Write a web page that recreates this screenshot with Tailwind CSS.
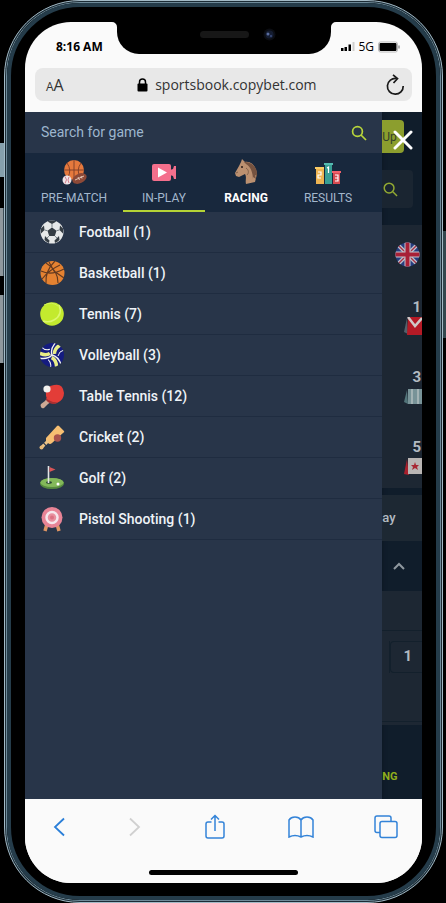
<!DOCTYPE html>
<html lang="en">
<head>
    <meta charset="UTF-8">
    <meta name="viewport" content="width=device-width, initial-scale=1.0">
    <title>CopyBet Sportsbook</title>
    <script src="https://cdn.jsdelivr.net/npm/@tailwindcss/browser@4"></script>
</head>
<body class="bg-black font-[Roboto,sans-serif]">

<div class="relative flex min-h-screen pl-1 pr-[3px]">

    <!-- Side buttons -->
    <div class="absolute left-0 top-[143px] h-[34px] w-1 bg-[#86a0ac]"></div>
    <div class="absolute left-0 top-[208px] h-[68px] w-1 border-r border-[#3c4c55] bg-[#8f989d]"></div>
    <div class="absolute left-0 top-[295px] h-[68px] w-1 border-r border-[#3c4c55] bg-[#8f989d]"></div>
    <div class="absolute right-0 top-[231px] h-[107px] w-[3px] bg-[#33484f]"></div>

    <!-- Phone frame -->
    <div class="flex flex-1 rounded-[76px] border border-[#a3bac6] bg-[#1b2b35] p-px">
    <div class="flex flex-1 rounded-[74px] border border-[#6f8b9a] bg-black">
    <div class="flex flex-1 rounded-[73px] border-4 border-[#253c4a] px-[14px] pb-[13px] pt-[15px]">
    <div class="flex flex-1 flex-col overflow-hidden rounded-[46px] bg-[#fafafa]">

        <!-- Status bar -->
        <header class="font-['Open_Sans',sans-serif] text-black">
            <div class="grid h-[46px] grid-cols-[1fr_214px_1fr]">
                <div class="flex h-[50px] items-center pl-[31px] text-[12px] font-bold whitespace-nowrap">8:16 AM</div>
                <div class="relative h-8 rounded-b-[22px] bg-black">
                    <svg class="absolute -left-[5px] top-0" width="5" height="5"><path d="M0 0H5V5A5 5 0 0 0 0 0Z" fill="#000"/></svg>
                    <svg class="absolute -right-[5px] top-0" width="5" height="5"><path d="M5 0H0V5A5 5 0 0 1 5 0Z" fill="#000"/></svg>
                    <div class="flex items-center pl-[83px] pt-[6px]">
                        <div class="h-[7px] w-[49px] rounded-full bg-[#171717]"></div>
                        <svg class="ml-[14px]" width="13" height="13" viewBox="0 0 13 13"><circle cx="6.500" cy="6.500" r="6" fill="#0b0d12"/><circle cx="6.500" cy="6.500" r="4" fill="#141c30"/><circle cx="5" cy="6" r="1.500" fill="#5a6da0"/><circle cx="8" cy="8" r="1.200" fill="#33436e"/></svg>
                    </div>
                </div>
                <div class="flex h-[50px] items-center gap-1 pl-[10px] text-[12px]">
                    <svg width="14" height="10" viewBox="0 0 14 10"><path d="M0 6h2.500v3H0zM3.500 5H6v4H3.500zM7.500 2.500H10V9H7.500z" fill="#000"/><path d="M11.500 0h2v9h-2z" fill="#cfcfcf"/></svg>
                    <span>5G</span>
                    <svg width="23" height="12" viewBox="0 0 23 12"><rect x=".5" y="1" width="19" height="10" rx="2" fill="#fff" stroke="#bbb"/><rect x="1.500" y="2" width="17" height="8" rx="1" fill="#000"/><path d="M21 4.500v3" stroke="#999" stroke-width="1.500"/></svg>
                </div>
            </div>

            <!-- Address bar -->
            <div class="px-[10px] pb-[11px]">
                <div class="flex h-[33px] items-center rounded-lg bg-[#e8e8e8] pl-[11px] pr-[7px] text-[#333]">
                    <button class="flex items-baseline" aria-label="Text size"><span class="text-[12px]">A</span><span class="text-[16px]">A</span></button>
                    <div class="flex flex-1 items-center justify-center gap-[7px] pl-1 text-[14px]">
                        <svg width="11" height="14" viewBox="0 0 11 14"><path d="M2.500 6V4a3 3 0 0 1 6 0v2" fill="none" stroke="#000" stroke-width="1.500"/><rect x=".5" y="5.500" width="10" height="8" rx="1" fill="#000"/></svg>
                        <span>sportsbook.copybet.com</span>
                    </div>
                    <button aria-label="Reload"><svg width="19" height="22" viewBox="0 0 19 22" fill="none" stroke="#1a1a1a" stroke-width="1.700"><path d="M10.500 4.500A7.900 7.900 0 1 0 17.200 12"/><path d="M7 .8l4.500 3.800L7.500 9"/></svg></button>
                </div>
            </div>
        </header>

        <main class="flex flex-1 overflow-hidden bg-[#101d2b]">

            <!-- Menu drawer -->
            <nav class="w-9/10 bg-[#283549] shadow-[0_0_4px_#0a1420]">
                <div class="flex h-[41px] items-center pl-4 pr-[15px]">
                    <input type="text" aria-label="Search for game" placeholder="Search for game" class="min-w-0 flex-1 bg-transparent text-[14px] outline-none placeholder:text-[#9db6ce]">
                    <button aria-label="Search"><svg width="16" height="16" viewBox="0 0 16 16" fill="none" stroke="#b7d43b" stroke-width="1.700"><circle cx="6.500" cy="6.500" r="4.900"/><path d="M10 10l5 5"/></svg></button>
                </div>

                <div class="flex h-[59px] bg-[#18283d] text-[12px] text-[#a3b7cc]">
                    <button class="flex w-[98px] flex-col items-center gap-1 pt-[6px]">
                        <svg width="26" height="26" viewBox="0 0 26 26"><circle cx="13" cy="11" r="10" fill="#e5793d"/><path d="M13 1v18M3 11h20M6 4q5 7 1 14M20 4q-5 7-1 14" fill="none" stroke="#7a3c28" stroke-width=".9"/><circle cx="6" cy="21" r="4.500" fill="#eee5e8"/><path d="M4 17.500q3 3 0 7M8 18q-2 3 0 6" fill="none" stroke="#c75365" stroke-width=".7"/><ellipse cx="18.500" cy="19.500" rx="7.500" ry="4.800" transform="rotate(-25 18.500 19.500)" fill="#8c4937"/><path d="M14 21l9-4M17 18l1.500 3M20 17l1 2.500" stroke="#e4c4b3" stroke-width="1"/></svg>
                        PRE-MATCH
                    </button>
                    <button class="flex w-[82px] flex-col items-center gap-1 border-b-2 border-[#b5d335] pt-[6px]">
                        <svg width="26" height="26" viewBox="0 0 26 26"><rect x="1" y="5" width="19" height="17" rx="2" fill="#f46f8c"/><path d="M19 11l3-1 1-3h2v13h-2l-1-3-3-1z" fill="#f46f8c"/><path d="M7 8.500l9 5-9 5z" fill="#fff"/></svg>
                        IN-PLAY
                    </button>
                    <button class="flex w-[82px] flex-col items-center gap-1 pt-[6px] font-bold text-white">
                        <svg width="26" height="26" viewBox="0 0 26 26"><path d="M8 3l1-3 3 3c6-1 11 4 12 12l-2 8-9 2c-1-4 1-7-1-10l-6 3-3-1-1-3 4-7z" fill="#bb9070"/><path d="M11 3c8-1 14 6 13 14l-2-1 1 4-3-2 0 3c0-7-2-13-7-16z" fill="#765340"/><circle cx="9" cy="8" r="1" fill="#251a18"/><path d="M3 14l2-1M13 9c3 2 3 5 1 7" fill="none" stroke="#80604b" stroke-width="1"/></svg>
                        RACING
                    </button>
                    <button class="flex w-[82px] flex-col items-center gap-1 pt-[6px]">
                        <svg width="26" height="26" viewBox="0 0 26 26"><path d="M1 9h8v16H1z" fill="#eeb452"/><path d="M0 8h9v2H0z" fill="#f9cc65"/><path d="M10 5h7v20h-7z" fill="#399e94"/><path d="M9 4h9v2H9z" fill="#54bab0"/><path d="M18 14h7v11h-7z" fill="#d64a50"/><path d="M17 12h9v2h-9z" fill="#f2606b"/><path d="M3 13h3v3H3v3h3M12 9l1.500-1v6M20 16h3v6h-3M20 19h3" fill="none" stroke="#fff" stroke-width="1.200"/></svg>
                        RESULTS
                    </button>
                </div>

                <ul class="text-[14px] font-medium text-[#eff3f7]">
                    <li class="border-b border-[#1f2c40]"><a href="#" class="flex h-10 items-center gap-[14px] pl-[14px]">
                        <svg width="26" height="26" viewBox="0 0 26 26"><circle cx="13" cy="13" r="11.500" fill="#e6e8e8"/><path d="M13 8.500l4.500 3.200-1.700 5.300h-5.600l-1.700-5.300zM8.500 2.500q4.500-2 9 0L13 5zM2 9.500l3-3 .5 4.500L2 14.500zM24 9.500l-3-3-.5 4.500 3.500 3.500zM5.500 21l.5-4 4.500 4.500-.5 2.500q-2.500-1-4.500-3zM20.500 21l-.5-4-4.500 4.500.5 2.500q2.500-1 4.500-3z" fill="#343c43"/><path d="M13 5v3.500M5.500 11l3 .7M20.500 11l-3 .7M10.200 17L8 19M15.800 17l2.200 2" stroke="#7a8389"/></svg>
                        Football (1)</a></li>
                    <li class="border-b border-[#1f2c40]"><a href="#" class="flex h-10 items-center gap-[14px] pl-[14px]">
                        <svg width="26" height="26" viewBox="0 0 26 26"><circle cx="13.500" cy="13" r="12" fill="#e58231"/><path d="M2 11q10 5 23-2M7 3q12 7 12 20M16 1Q6 11 7 23M10 2l5 9 10 7M3 19q7-9 18-14" fill="none" stroke="#623920" stroke-width="1.100"/></svg>
                        Basketball (1)</a></li>
                    <li class="border-b border-[#1f2c40]"><a href="#" class="flex h-10 items-center gap-[14px] pl-[14px]">
                        <svg width="26" height="26" viewBox="0 0 26 26"><circle cx="13" cy="13" r="11.800" fill="#c3ea2e"/><path d="M20 4q4 10-5 15-5 3-11 1" fill="none" stroke="#dcf76e" stroke-width="1.500"/><path d="M5 4q8-4 14 1" fill="none" stroke="#d2f35b" stroke-width="1"/></svg>
                        Tennis (7)</a></li>
                    <li class="border-b border-[#1f2c40]"><a href="#" class="flex h-10 items-center gap-[14px] pl-[14px]">
                        <svg width="26" height="26" viewBox="0 0 26 26" fill="none">
                            <clipPath id="ball"><circle cx="13" cy="13" r="12"/></clipPath>
                            <g clip-path="url(#ball)">
                                <path d="M0 0h26v26H0z" fill="#151c80"/>
                                <g id="panel"><path d="M13 13Q11 7 17 0" stroke="#f3f4ee" stroke-width="1.400"/><path d="M15.500 12Q15 7 21 3" stroke="#e9ed86" stroke-width="3.500"/><path d="M19 14q1-5 6-6" stroke="#f3f4ee" stroke-width="1"/></g>
                                <use href="#panel" transform="rotate(120 13 13)"/>
                                <use href="#panel" transform="rotate(240 13 13)"/>
                            </g>
                        </svg>
                        Volleyball (3)</a></li>
                    <li class="border-b border-[#1f2c40]"><a href="#" class="flex h-10 items-center gap-[14px] pl-[14px]">
                        <svg width="26" height="26" viewBox="0 0 26 26"><path d="M8 15l4 4-3 2-4 4q-2 1-3-1t0-3l4-3z" fill="#cda995"/><path d="M7 13Q6 3 15 2q9-2 10 8 0 7-7 10-5 2-10-4z" fill="#e33d38"/><path d="M7 15q5 5 12 4l-4 2q-5 0-8-4z" fill="#a82f31"/><circle cx="8" cy="6" r="3.600" fill="#f2f2ef"/></svg>
                        Table Tennis (12)</a></li>
                    <li class="border-b border-[#1f2c40]"><a href="#" class="flex h-10 items-center gap-[14px] pl-[14px]">
                        <svg width="26" height="26" viewBox="0 0 26 26"><path d="M7 14L18 2q1-1 2 0l5 5q1 1-1 2L13 19q-2 2-4 0l-2-2z" fill="#f7bf72"/><path d="M9 17l-7 7" stroke="#ecc487" stroke-width="3" stroke-dasharray="4 1.200"/><circle cx="2.500" cy="23.500" r="2" fill="#e7ba79"/><circle cx="18.500" cy="14" r="3.700" fill="#aa534d"/></svg>
                        Cricket (2)</a></li>
                    <li class="border-b border-[#1f2c40]"><a href="#" class="flex h-10 items-center gap-[14px] pl-[14px]">
                        <svg width="26" height="26" viewBox="0 0 26 26"><ellipse cx="13" cy="18.500" rx="12" ry="5.500" fill="#568b3f"/><ellipse cx="13" cy="17.500" rx="11.500" ry="4.500" fill="#83b95a"/><ellipse cx="10" cy="17.500" rx="3" ry="1.300" fill="#294634"/><path d="M9.500 1v17" stroke="#e2e5e5" stroke-width="1.600"/><path d="M10.500 2l6 2.500-6 2.500z" fill="#d95557"/><circle cx="19" cy="19" r="1.500" fill="#fff"/></svg>
                        Golf (2)</a></li>
                    <li class="border-b border-[#1f2c40]"><a href="#" class="flex h-10 items-center gap-[14px] pl-[14px]">
                        <svg width="26" height="26" viewBox="0 0 26 26"><path d="M8 18l-2 7M18 18l2 7" stroke="#df9564" stroke-width="3.500"/><circle cx="13" cy="11.500" r="10.500" fill="#e88496"/><circle cx="13" cy="11.500" r="5.500" fill="#e8909f" stroke="#f6e6ec" stroke-width="2.500"/><circle cx="13" cy="11.500" r="2" fill="#dc7082"/></svg>
                        Pistol Shooting (1)</a></li>
                </ul>
            </nav>

            <!-- Dimmed page behind the drawer -->
            <aside class="relative flex flex-1 flex-col overflow-hidden text-[#b3bac1]">
                <button aria-label="Close menu" class="absolute right-[9px] top-[18px] z-10"><svg width="20" height="20" viewBox="0 0 20 20" stroke="#fff" stroke-width="3" stroke-linecap="round"><path d="M2 2l16 16M18 2L2 18"/></svg></button>
                <div class="flex h-[58px] pt-2">
                    <button class="flex h-[33px] w-[22px] items-center rounded-r-[4px] bg-[#8c9e2e] text-[12px] text-[#35422b]">Up</button>
                </div>
                <button aria-label="Search page" class="mr-[9px] flex h-[38px] items-center rounded-r bg-[#1a2531] pl-px">
                    <svg width="15" height="15" viewBox="0 0 16 16" fill="none" stroke="#91a832" stroke-width="1.600"><circle cx="6.500" cy="6.500" r="5.200"/><path d="M10.500 10.500l4.500 4.500"/></svg>
                </button>

                <div class="mt-[17px] flex h-[263px] flex-col items-end bg-[#1d2733] pt-[17px] text-[15px] leading-5 font-bold">
                    <svg class="mr-[2px]" width="25" height="25" viewBox="0 0 25 25"><clipPath id="flag"><circle cx="12.500" cy="12.500" r="12"/></clipPath><g clip-path="url(#flag)"><path d="M0 0h25v25H0z" fill="#263c7e"/><path d="M0 0l25 25M25 0L0 25" stroke="#b9bdca" stroke-width="4"/><path d="M0 0l25 25M25 0L0 25" stroke="#a82e41" stroke-width="1.300"/><path d="M12.500 0v25M0 12.500h25" stroke="#c3c5ce" stroke-width="6"/><path d="M12.500 0v25M0 12.500h25" stroke="#a82037" stroke-width="4"/></g></svg>
                    <div class="mt-[30px] flex h-[70px] flex-col items-end">
                        <span class="pr-[1px]">1</span>
                        <svg width="18" height="18" viewBox="0 0 18 18"><path d="M3 1L0 15l4 2z" fill="#53616b"/><path d="M4 0h14v18H3z" fill="#b51a26"/><path d="M4 0l7 9 7-8" fill="none" stroke="#d0c9c8" stroke-width="2.500"/></svg>
                    </div>
                    <div class="flex h-[70px] flex-col items-end">
                        <span class="pr-[1px]">3</span>
                        <svg width="18" height="18" viewBox="0 0 18 18"><path d="M3 3L0 15l4 2z" fill="#53757a"/><path d="M4 2h14v15H4z" fill="#789398"/><path d="M8 2v15M14 2v15" stroke="#a3b3b5" stroke-width="2"/></svg>
                    </div>
                    <div class="flex flex-col items-end">
                        <span class="pr-[1px]">5</span>
                        <svg width="18" height="18" viewBox="0 0 18 18"><path d="M3 2L0 17l5 1z" fill="#a91f2c"/><path d="M4 1h14v16H4z" fill="#b9b5b4"/><path d="M11 5l1 3h3l-2 2 1 3-3-2-3 2 1-3-2-2h3z" fill="#a82632"/></svg>
                    </div>
                </div>

                <div class="mt-[7px] flex h-[46px] items-center bg-[#1d2833] text-[13px] font-medium">ay</div>
                <div class="flex h-[50px] items-center pl-[11px]">
                    <svg width="12" height="8" viewBox="0 0 12 8" fill="none" stroke="#8f989f" stroke-width="2"><path d="M1 7l5-5 5 5"/></svg>
                </div>
                <div class="h-[134px] bg-[#1d2733]">
                    <div class="h-10 border-b border-[#13202c]"></div>
                    <div class="flex h-[51px] items-center pl-[2px]">
                        <div class="h-8 w-[6px] border-r border-[#13202c]"></div>
                        <button class="h-8 flex-1 rounded-l border border-r-0 border-[#13202c] pr-[10px] text-right text-[15px] font-bold">1</button>
                    </div>
                    <div class="h-10 border-b border-[#13202c]"></div>
                </div>
                <div class="flex flex-1 items-end pb-[14px] text-[11px] font-bold text-[#8fae1c]">NG</div>
            </aside>
        </main>

        <!-- Browser toolbar -->
        <footer class="bg-[#fafafa] pb-2 pt-[14px]">
            <div class="flex h-[27px] items-center justify-between pl-7 pr-6">
                <button aria-label="Back"><svg width="12" height="20" viewBox="0 0 12 20" fill="none" stroke="#2b7fd8" stroke-width="1.800"><path d="M11 1.500L2 10l9 8.500"/></svg></button>
                <button aria-label="Forward" class="pl-1"><svg width="12" height="20" viewBox="0 0 12 20" fill="none" stroke="#d0d0d0" stroke-width="1.800"><path d="M1 1.500l9 8.500-9 8.500"/></svg></button>
                <button aria-label="Share" class="pl-1"><svg width="20" height="26" viewBox="0 0 20 26" fill="none" stroke="#3383d8" stroke-width="1.500"><path d="M6.500 8H3Q1 8 1 10v12q0 2 2 2h14q2 0 2-2V10q0-2-2-2h-3.500M10 17V2M6 5.500l4-4 4 4"/></svg></button>
                <button aria-label="Bookmarks" class="pl-1"><svg width="26" height="22" viewBox="0 0 26 22" fill="none" stroke="#3383d8" stroke-width="1.500"><path d="M13 4Q11 1 7 1 3 1 1 4v17q6-3 12 0 6-3 12 0V4q-2-3-6-3-4 0-6 3zM13 4v17"/></svg></button>
                <button aria-label="Tabs"><svg width="24" height="24" viewBox="0 0 24 24" fill="none" stroke="#3383d8" stroke-width="1.500"><rect x="6" y="6.500" width="17" height="16" rx="2"/><path d="M6 17.500H3q-2 0-2-2V3q0-2 2-2h12q2 0 2 2v3.500"/></svg></button>
            </div>
            <div class="mx-auto mt-[30px] h-[5px] w-[149px] rounded-full bg-black"></div>
        </footer>
    </div>
    </div>
    </div>
    </div>
</div>

</body>
</html>
